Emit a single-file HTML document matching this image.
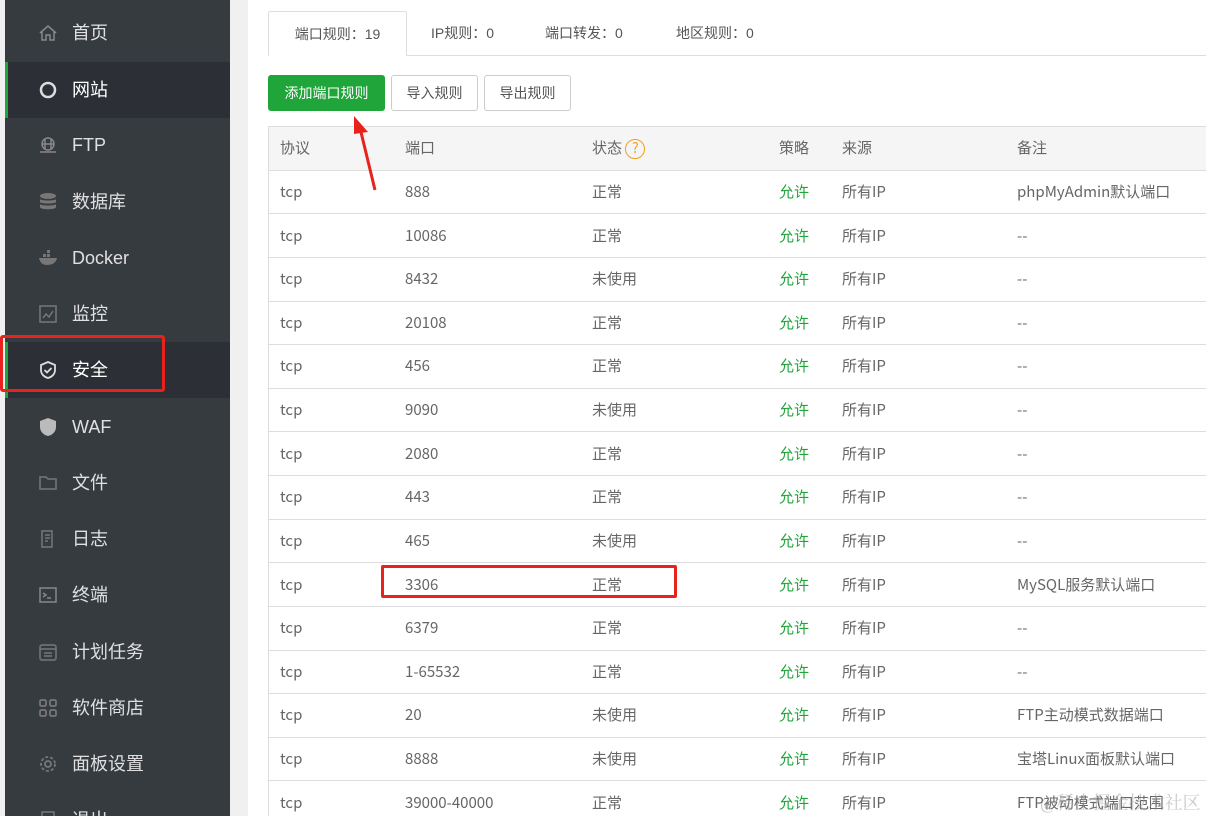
<!DOCTYPE html>
<html><head><meta charset="utf-8"><style>
*{margin:0;padding:0;box-sizing:border-box}
html,body{width:1206px;height:816px;overflow:hidden}
body{background:#f0f0f0;font-family:"Liberation Sans","Noto Sans CJK SC",sans-serif;position:relative;color:#555}
.side{position:absolute;left:5px;top:0;width:225px;height:816px;background:#363b40;overflow:hidden}
.item{position:absolute;left:0;width:225px;height:56px;color:#e0e0e0;font-size:18px}
.item.act{background:#2c3036;border-left:3px solid #20a53a;color:#fff}
.item .ic{position:absolute;left:33px;top:18px;width:20px;height:20px}
.item .tx{position:absolute;left:67px;top:0;line-height:56px}
.item.act .ic{left:30px}.item.act .tx{left:64px}
.main{position:absolute;left:248px;top:0;width:958px;height:816px;background:#fff}
.tab{position:absolute;top:11px;height:45px;font-size:14px;color:#555;line-height:45px;white-space:nowrap}
.tab.act{left:268px;width:139px;border:1px solid #ddd;border-bottom:1px solid #fff;background:#fff;text-align:center;border-radius:2px 2px 0 0}
.btn{position:absolute;top:75px;height:36px;font-size:14px;line-height:34px;text-align:center;border:1px solid #ccc;border-radius:3px;color:#555;background:#fff;white-space:nowrap}
.tw{position:absolute;left:268px;top:126px;width:938px;height:690px;overflow:hidden;border-left:1px solid #ddd}
table{width:960px;border-collapse:collapse;font-size:15px;table-layout:fixed;font-family:"Noto Sans CJK SC","Liberation Sans",sans-serif}
td,th{height:43.64px;border-top:1px solid #ddd;text-align:left;font-weight:normal;padding:0 0 0 11px;color:#666;line-height:20px;vertical-align:middle;white-space:nowrap}
th{background:#f5f5f5}
.g{color:#20a53a}
</style></head><body>
<div class="side">
<div class="item" style="top:5px"><span class="ic"><svg width="20" height="20" viewBox="0 0 20 20" fill="none" stroke="#888" stroke-width="1.5"><path d="M2 10L10 3l8 7M4 9v8h4v-5h4v5h4V9"/></svg></span><span class="tx">首页</span></div>
<div class="item act" style="top:62px"><span class="ic"><svg width="20" height="20"><circle cx="10" cy="10" r="7" fill="none" stroke="#ddd" stroke-width="2.5"/></svg></span><span class="tx">网站</span></div>
<div class="item" style="top:117px"><span class="ic"><svg width="20" height="20" fill="none" stroke="#888" stroke-width="1.5"><circle cx="10" cy="9" r="6"/><path d="M2 17h16M7 4v10M13 4v10M4 9h12"/></svg></span><span class="tx">FTP</span></div>
<div class="item" style="top:174px"><span class="ic"><svg width="20" height="20" fill="#777"><ellipse cx="10" cy="4" rx="8" ry="3"/><path d="M2 7c0 2 16 2 16 0v3c0 2-16 2-16 0zM2 12c0 2 16 2 16 0v3c0 3-16 3-16 0z"/></svg></span><span class="tx">数据库</span></div>
<div class="item" style="top:230px"><span class="ic"><svg width="20" height="20" fill="#777"><path d="M1 10h18c-1 5-5 7-10 7S2 14 1 10zM5 6h3v3H5zM9 6h3v3H9zM9 2h3v3H9z"/></svg></span><span class="tx">Docker</span></div>
<div class="item" style="top:286px"><span class="ic"><svg width="20" height="20" fill="none" stroke="#777" stroke-width="1.5"><rect x="2" y="2" width="16" height="16"/><path d="M5 14l3-4 3 3 4-6"/></svg></span><span class="tx">监控</span></div>
<div class="item act" style="top:342px"><span class="ic"><svg width="20" height="20" fill="none" stroke="#ddd" stroke-width="1.8"><path d="M10 2l7 3v5c0 4-3 7-7 8-4-1-7-4-7-8V5z"/><path d="M6.5 10l2.5 2.5 4.5-4.5"/></svg></span><span class="tx">安全</span></div>
<div class="item" style="top:399px"><span class="ic"><svg width="20" height="20" fill="#bbb"><path d="M10 1l8 3v6c0 4-3 8-8 9-5-1-8-5-8-9V4z"/></svg></span><span class="tx">WAF</span></div>
<div class="item" style="top:455px"><span class="ic"><svg width="20" height="20" fill="none" stroke="#777" stroke-width="1.5"><path d="M2 4h6l2 2h8v10H2z"/></svg></span><span class="tx">文件</span></div>
<div class="item" style="top:511px"><span class="ic"><svg width="20" height="20" fill="none" stroke="#777" stroke-width="1.5"><path d="M4 2h10v16H4zM7 6h5M7 9h5M7 12h3"/></svg></span><span class="tx">日志</span></div>
<div class="item" style="top:567px"><span class="ic"><svg width="20" height="20" fill="none" stroke="#888" stroke-width="1.5"><rect x="2" y="3" width="16" height="14"/><path d="M5 8l3 2-3 2M9 13h4"/></svg></span><span class="tx">终端</span></div>
<div class="item" style="top:624px"><span class="ic"><svg width="20" height="20" fill="none" stroke="#777" stroke-width="1.5"><rect x="2" y="3" width="16" height="15" rx="2"/><path d="M2 7h16M6 11h8M6 14h8"/></svg></span><span class="tx">计划任务</span></div>
<div class="item" style="top:680px"><span class="ic"><svg width="20" height="20" fill="none" stroke="#777" stroke-width="1.8"><rect x="2" y="2" width="6" height="6" rx="1.5"/><rect x="12" y="2" width="6" height="6" rx="1.5"/><rect x="2" y="12" width="6" height="6" rx="1.5"/><rect x="12" y="12" width="6" height="6" rx="1.5"/></svg></span><span class="tx">软件商店</span></div>
<div class="item" style="top:736px"><span class="ic"><svg width="20" height="20" fill="none" stroke="#777" stroke-width="1.8"><circle cx="10" cy="10" r="3"/><circle cx="10" cy="10" r="7" stroke-dasharray="3 2"/></svg></span><span class="tx">面板设置</span></div>
<div class="item" style="top:792px"><span class="ic"><svg width="20" height="20" fill="none" stroke="#777" stroke-width="1.5"><rect x="4" y="2" width="12" height="16"/></svg></span><span class="tx">退出</span></div>
</div>
<div style="position:absolute;left:0;top:335px;width:165px;height:57px;border:3px solid #e8231d;border-radius:3px"></div>
<div class="main"></div>
<div style="position:absolute;left:268px;top:55px;width:938px;border-top:1px solid #ddd"></div>
<div class="tab act">端口规则：19</div>
<div class="tab" style="left:431px">IP规则：0</div>
<div class="tab" style="left:545px">端口转发：0</div>
<div class="tab" style="left:676px">地区规则：0</div>
<div class="btn" style="left:268px;width:117px;background:#20a53a;border-color:#20a53a;color:#fff">添加端口规则</div>
<div class="btn" style="left:391px;width:87px">导入规则</div>
<div class="btn" style="left:484px;width:87px">导出规则</div>
<div class="tw"><table>
<colgroup><col style="width:125px"><col style="width:187px"><col style="width:187px"><col style="width:63px"><col style="width:175px"><col style="width:223px"></colgroup>
<tr><th>协议</th><th>端口</th><th>状态 <span style="display:inline-block;width:20px;height:20px;border:1.5px solid #f0a020;border-radius:50%;color:#f0a020;font-size:14px;line-height:17px;text-align:center;vertical-align:middle">?</span></th><th>策略</th><th>来源</th><th>备注</th></tr>
<tr><td>tcp</td><td>888</td><td>正常</td><td class="g">允许</td><td>所有IP</td><td>phpMyAdmin默认端口</td></tr>
<tr><td>tcp</td><td>10086</td><td>正常</td><td class="g">允许</td><td>所有IP</td><td>--</td></tr>
<tr><td>tcp</td><td>8432</td><td>未使用</td><td class="g">允许</td><td>所有IP</td><td>--</td></tr>
<tr><td>tcp</td><td>20108</td><td>正常</td><td class="g">允许</td><td>所有IP</td><td>--</td></tr>
<tr><td>tcp</td><td>456</td><td>正常</td><td class="g">允许</td><td>所有IP</td><td>--</td></tr>
<tr><td>tcp</td><td>9090</td><td>未使用</td><td class="g">允许</td><td>所有IP</td><td>--</td></tr>
<tr><td>tcp</td><td>2080</td><td>正常</td><td class="g">允许</td><td>所有IP</td><td>--</td></tr>
<tr><td>tcp</td><td>443</td><td>正常</td><td class="g">允许</td><td>所有IP</td><td>--</td></tr>
<tr><td>tcp</td><td>465</td><td>未使用</td><td class="g">允许</td><td>所有IP</td><td>--</td></tr>
<tr><td>tcp</td><td>3306</td><td>正常</td><td class="g">允许</td><td>所有IP</td><td>MySQL服务默认端口</td></tr>
<tr><td>tcp</td><td>6379</td><td>正常</td><td class="g">允许</td><td>所有IP</td><td>--</td></tr>
<tr><td>tcp</td><td>1-65532</td><td>正常</td><td class="g">允许</td><td>所有IP</td><td>--</td></tr>
<tr><td>tcp</td><td>20</td><td>未使用</td><td class="g">允许</td><td>所有IP</td><td>FTP主动模式数据端口</td></tr>
<tr><td>tcp</td><td>8888</td><td>未使用</td><td class="g">允许</td><td>所有IP</td><td>宝塔Linux面板默认端口</td></tr>
<tr><td>tcp</td><td>39000-40000</td><td>正常</td><td class="g">允许</td><td>所有IP</td><td>FTP被动模式端口范围</td></tr>
</table></div>
<div style="position:absolute;left:381px;top:565px;width:296px;height:33px;border:3px solid #e8231d;border-radius:2px"></div>
<svg style="position:absolute;left:340px;top:108px" width="50" height="90"><path d="M35 82L20 20" stroke="#e8231d" stroke-width="3"/><path d="M14 8l14 16-14 2z" fill="#e8231d"/></svg>
<div style="position:absolute;left:1040px;top:789px;font-size:18px;white-space:nowrap;color:rgba(150,150,150,.5);font-family:'Liberation Serif','Noto Serif CJK SC',serif">@稀土掘金技术社区</div>
</body></html>
